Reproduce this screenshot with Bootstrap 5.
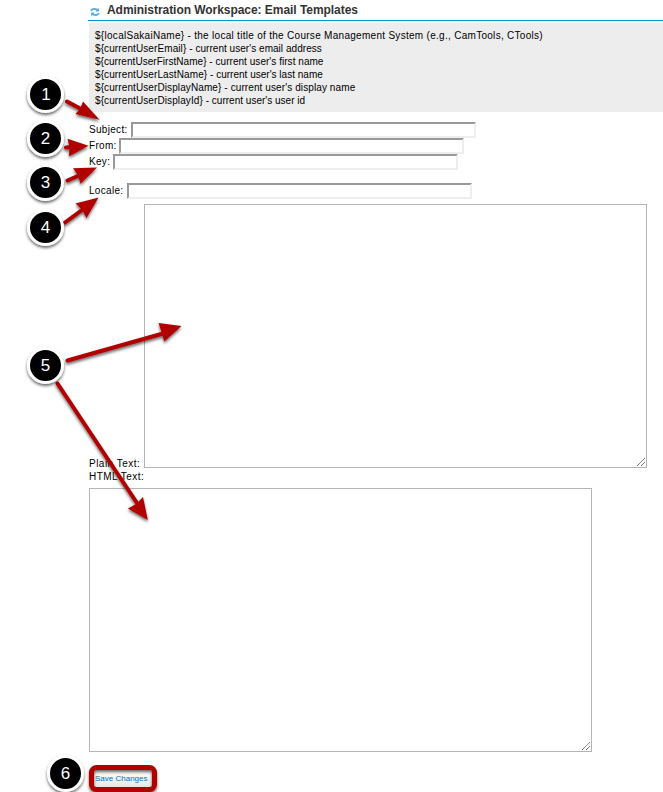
<!DOCTYPE html>
<html lang="en">
<head>
<meta charset="utf-8">
<meta name="viewport" content="width=device-width, initial-scale=1">
<title>Administration Workspace: Email Templates</title>
<link href="https://cdn.jsdelivr.net/npm/bootstrap@5.3.0/dist/css/bootstrap.min.css" rel="stylesheet">
<style>
body{font-family:"Liberation Sans",Arial,sans-serif;font-size:10px;line-height:13px;color:#000;letter-spacing:.3px;height:792px}
.workspace{padding-left:88px}
.title-bar{height:21px;border-bottom:1px solid #0099cc;padding-left:2px}
.title-bar h1{font-size:12px;line-height:21px;color:#333;letter-spacing:-.05px;margin-left:7px;padding-top:1px}
.variables{background:#ededed;margin:2px 0 0 1px;height:89px;padding:6px 6px;letter-spacing:.04px}
.variables .roomy{letter-spacing:.29px}
.variables .medium{letter-spacing:.1px}
.variables .tight{letter-spacing:.01px}
.template-form{padding-left:1px;padding-top:10px}
.field-row{height:16px}
.field-row label{padding-top:1px}
.field-row.locale{margin-top:13px}
.field-row input{width:345px;height:16px;border:2px solid;border-color:#999 #eee #eee #999;padding:0 2px;font-size:10px;outline:0}
.w-subject{width:42px}.w-from{width:30px}.w-key{width:24px}.w-locale{width:38px}.w-plain{width:55px}
.text-box{display:block;width:503px;height:264px;border:1px solid #b5b5b5;resize:none;outline:0;padding:2px}
.grip{right:2px;bottom:2px}
.plain-row{margin-top:5px}
.w-plain,.html-label{letter-spacing:.48px;padding-top:2px;height:13px}
.w-plain{margin-bottom:0}
.html-box{margin-top:7px;width:503px}
.save-btn{margin:16px 0 0 3px;width:62px;height:22px;border-radius:4px;background:linear-gradient(#fff,#e4e4e4);border:0;color:#0873b8;font-size:8px;line-height:20px;padding:0 0 0 3px;letter-spacing:0}
.callouts{font-size:17px;letter-spacing:0}
</style>
<script src="https://cdn.jsdelivr.net/npm/bootstrap@5.3.0/dist/js/bootstrap.bundle.min.js"></script>
</head>
<body class="bg-white position-relative overflow-hidden">
<main class="workspace">
  <header class="title-bar d-flex align-items-center">
    <svg width="10" height="10" viewBox="0 0 10 10" class="mt-1" fill="none" stroke="#62aee5" stroke-width="1.9"><path d="M1 3.800C2 1.700 5 1.500 7.500 2.800M9 6.200C8 8.300 5 8.500 2.500 7.200"/><path d="M8.800 .8v3.700H5.500zM1.200 9.200V5.500h3.300z" fill="#4aa3df" stroke="none"/></svg>
    <h1 class="fw-bold mb-0">Administration Workspace: Email Templates</h1>
  </header>
  <section class="variables text-nowrap">
    <div class="roomy">${localSakaiName} - the local title of the Course Management System (e.g., CamTools, CTools)</div>
    <div><span class="medium">${currentUserEmail}</span> - current user's email address</div>
    <div>${currentUserFirstName} - current user's first name</div>
    <div><span class="medium">${currentUserLastName}</span><span class="tight"> - current user's last name</span></div>
    <div class="medium">${currentUserDisplayName} - current user's display name</div>
    <div><span class="medium">${currentUserDisplayId}</span><span class="tight"> - current user's user id</span></div>
  </section>
  <form class="template-form">
    <div class="field-row d-flex"><label class="w-subject text-nowrap" for="subject">Subject:</label><input id="subject" type="text"></div>
    <div class="field-row d-flex"><label class="w-from text-nowrap" for="from">From:</label><input id="from" type="text"></div>
    <div class="field-row d-flex"><label class="w-key text-nowrap" for="key">Key:</label><input id="key" type="text"></div>
    <div class="field-row locale d-flex"><label class="w-locale text-nowrap" for="locale">Locale:</label><input id="locale" type="text"></div>
    <div class="plain-row d-flex align-items-end">
      <label class="w-plain text-nowrap" for="plain">Plain Text:</label>
      <div class="position-relative"><textarea id="plain" class="text-box"></textarea><svg class="grip position-absolute" width="8" height="8" stroke="#555" stroke-dasharray="1.3 .3"><path d="M0 8L8 0M4 8L8 4"/></svg></div>
    </div>
    <label class="html-label d-block" for="html">HTML Text:</label>
    <div class="html-box position-relative"><textarea id="html" class="text-box"></textarea><svg class="grip position-absolute" width="8" height="8" stroke="#555" stroke-dasharray="1.3 .3"><path d="M0 8L8 0M4 8L8 4"/></svg></div>
    <button type="button" class="save-btn d-block text-start text-nowrap">Save Changes</button>
  </form>
</main>
<svg class="callouts position-absolute top-0 start-0 pe-none" width="663" height="792" viewBox="0 0 663 792">
  <defs><filter id="shade" filterUnits="userSpaceOnUse" x="0" y="0" width="663" height="800"><feDropShadow dx="0" dy="2" stdDeviation="1.8" flood-color="#000" flood-opacity=".6"/></filter></defs>
  <g filter="url(#shade)" fill="#b00000">
    <g stroke="#b00000" stroke-width="4" stroke-linecap="round"><path d="M67 101.500L82 109.500M66 147.500L72 147M67.500 180.500L80 175M65 222.500L84 208.500M67.500 360.500L163 333.500M57.500 383.500L137 503"/></g>
    <path d="M99.500 119.800L83 101.500L80.300 108.500L75.500 114zM88.500 145.700L67.500 138.800L69.500 147L69 156.200zM97 167.500L73 168.300L78 175L80.500 183.800zM98.500 197.500L75.500 203.500L82 209.500L86.500 218zM181.500 326L158.500 323L161.500 332L164.300 341.500zM147.800 520L128 508.500L136 504L143 497z"/>
  </g>
  <rect x="91.500" y="767.500" width="63" height="22" rx="5" fill="none" stroke="#b00000" stroke-width="5" filter="url(#shade)"/>
  <g fill="#000" stroke="#fff" stroke-width="3" filter="url(#shade)">
    <circle cx="45.500" cy="94.500" r="17"/><circle cx="45.500" cy="138.500" r="17"/><circle cx="45.500" cy="182.500" r="17"/><circle cx="45.500" cy="227.500" r="17"/><circle cx="45.500" cy="365.500" r="17"/><circle cx="65.500" cy="773.500" r="17"/>
  </g>
  <g fill="#fff" text-anchor="middle"><text x="46" y="100">1</text><text x="45.500" y="144">2</text><text x="45.500" y="188">3</text><text x="45.500" y="233">4</text><text x="45.500" y="371">5</text><text x="65.500" y="779">6</text></g>
</svg>
</body>
</html>
